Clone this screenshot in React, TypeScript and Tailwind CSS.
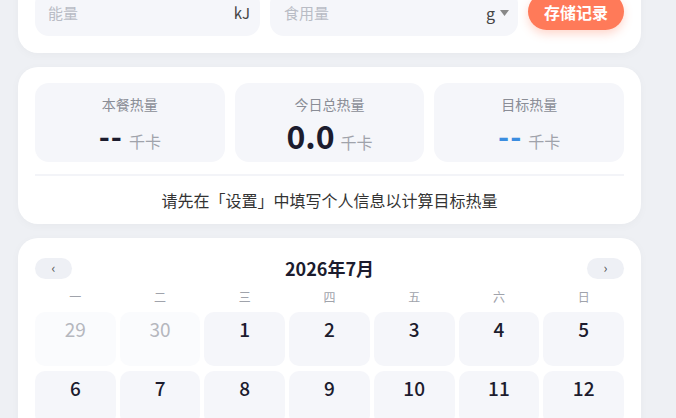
import React from "react";

const font = { fontFamily: '"Noto Sans CJK SC", "Noto Sans", sans-serif' };

function StatBox({ label, value, valueClass }: { label: string; value: string; valueClass: string }) {
  return (
    <div className="flex h-[79px] flex-col items-center rounded-[14px] bg-[#f5f6fa] pt-[11px]">
      <div className="text-[14px] leading-[20px] text-[#8a8d96]">{label}</div>
      <div className="mt-[4px] flex items-baseline gap-[6px]">
        <span className={valueClass}>{value}</span>
        <span className="text-[16px] text-[#a0a3ab]">千卡</span>
      </div>
    </div>
  );
}

export default function App() {
  const week = ["一", "二", "三", "四", "五", "六", "日"];
  const days: { n: number; muted?: boolean }[] = [
    { n: 29, muted: true },
    { n: 30, muted: true },
    ...Array.from({ length: 12 }, (_, i) => ({ n: i + 1 })),
  ];
  return (
    <div className="min-h-screen overflow-hidden bg-[#eef0f4]" style={font}>
      <div className="ml-[18px] mr-[35px] flex flex-col gap-[14px] pb-6">
        {/* top card (scrolled) */}
        <div className="mt-[-26px] rounded-[20px] bg-white px-[17px] pb-[17px] pt-[16px] shadow-[0_2px_10px_rgba(0,0,0,0.03)]">
          <div className="flex items-start gap-[10px]">
            <div className="flex h-[46px] w-[225px] items-center justify-between rounded-[14px] bg-[#f5f6fa] pl-[13px] pr-[10px]">
              <span className="text-[15px] text-[#b9bcc5]">能量</span>
              <span className="text-[15px] text-[#444]">kJ</span>
            </div>
            <div className="flex h-[46px] flex-1 items-center justify-between rounded-[14px] bg-[#f5f6fa] pl-[14px] pr-[9px]">
              <span className="text-[15px] text-[#b9bcc5]">食用量</span>
              <span className="flex items-center gap-[5px] text-[16px] text-[#444]">
                g
                <svg width="9" height="6" viewBox="0 0 9 6">
                  <path d="M0 0 L9 0 L4.5 6 Z" fill="#888" />
                </svg>
              </span>
            </div>
            <button className="mt-[3px] h-[37px] w-[96px] rounded-full bg-[#ff7a59] text-[16px] font-bold text-white shadow-[0_4px_10px_rgba(255,122,89,0.3)]">
              存储记录
            </button>
          </div>
        </div>

        {/* stats card */}
        <div className="rounded-[20px] bg-white px-[17px] pt-[16px] shadow-[0_2px_10px_rgba(0,0,0,0.03)]">
          <div className="grid grid-cols-3 gap-[10px]">
            <StatBox label="本餐热量" value="--" valueClass="text-[30px] font-bold leading-[34px] tracking-[1px] text-[#1c1c2e]" />
            <StatBox label="今日总热量" value="0.0" valueClass="text-[32px] font-bold leading-[34px] text-[#1c1c2e]" />
            <StatBox label="目标热量" value="--" valueClass="text-[30px] font-bold leading-[34px] tracking-[1px] text-[#3b8de0]" />
          </div>
          <div className="mt-[12px] h-[2px] bg-[#f3f4f8]" />
          <div className="flex h-[48px] items-center justify-center text-[16px] text-[#333]">
            请先在「设置」中填写个人信息以计算目标热量
          </div>
        </div>

        {/* calendar */}
        <div className="rounded-[20px] bg-white px-[17px] pt-[17px] pb-[17px] shadow-[0_2px_10px_rgba(0,0,0,0.03)]">
          <div className="flex h-[26px] items-center justify-between">
            <button className="flex h-[21px] w-[37px] items-center justify-center rounded-full bg-[#eef0f5] text-[13px] text-[#555]">‹</button>
            <div className="text-[18px] font-bold leading-[26px] text-[#1c1c2e]">2026年7月</div>
            <button className="flex h-[21px] w-[37px] items-center justify-center rounded-full bg-[#eef0f5] text-[13px] text-[#555]">›</button>
          </div>
          <div className="mt-[5px] grid grid-cols-7 gap-[4px]">
            {week.map((w) => (
              <div key={w} className="flex h-[22px] items-center justify-center text-[12px] text-[#a0a3ab]">
                {w}
              </div>
            ))}
          </div>
          <div className="mt-[4px] grid grid-cols-7 gap-[4px] gap-y-[5px]">
            {days.map((d, i) => (
              <div
                key={i}
                className={
                  d.muted
                    ? "flex h-[54px] justify-center rounded-[10px] bg-[#fafbfd] pt-[3px] text-[19px] text-[#b5b7be]"
                    : "flex h-[54px] justify-center rounded-[10px] bg-[#f5f6fa] pt-[3px] text-[19px] font-medium text-[#1c1c2e]"
                }
              >
                {d.n}
              </div>
            ))}
          </div>
        </div>
      </div>
    </div>
  );
}
